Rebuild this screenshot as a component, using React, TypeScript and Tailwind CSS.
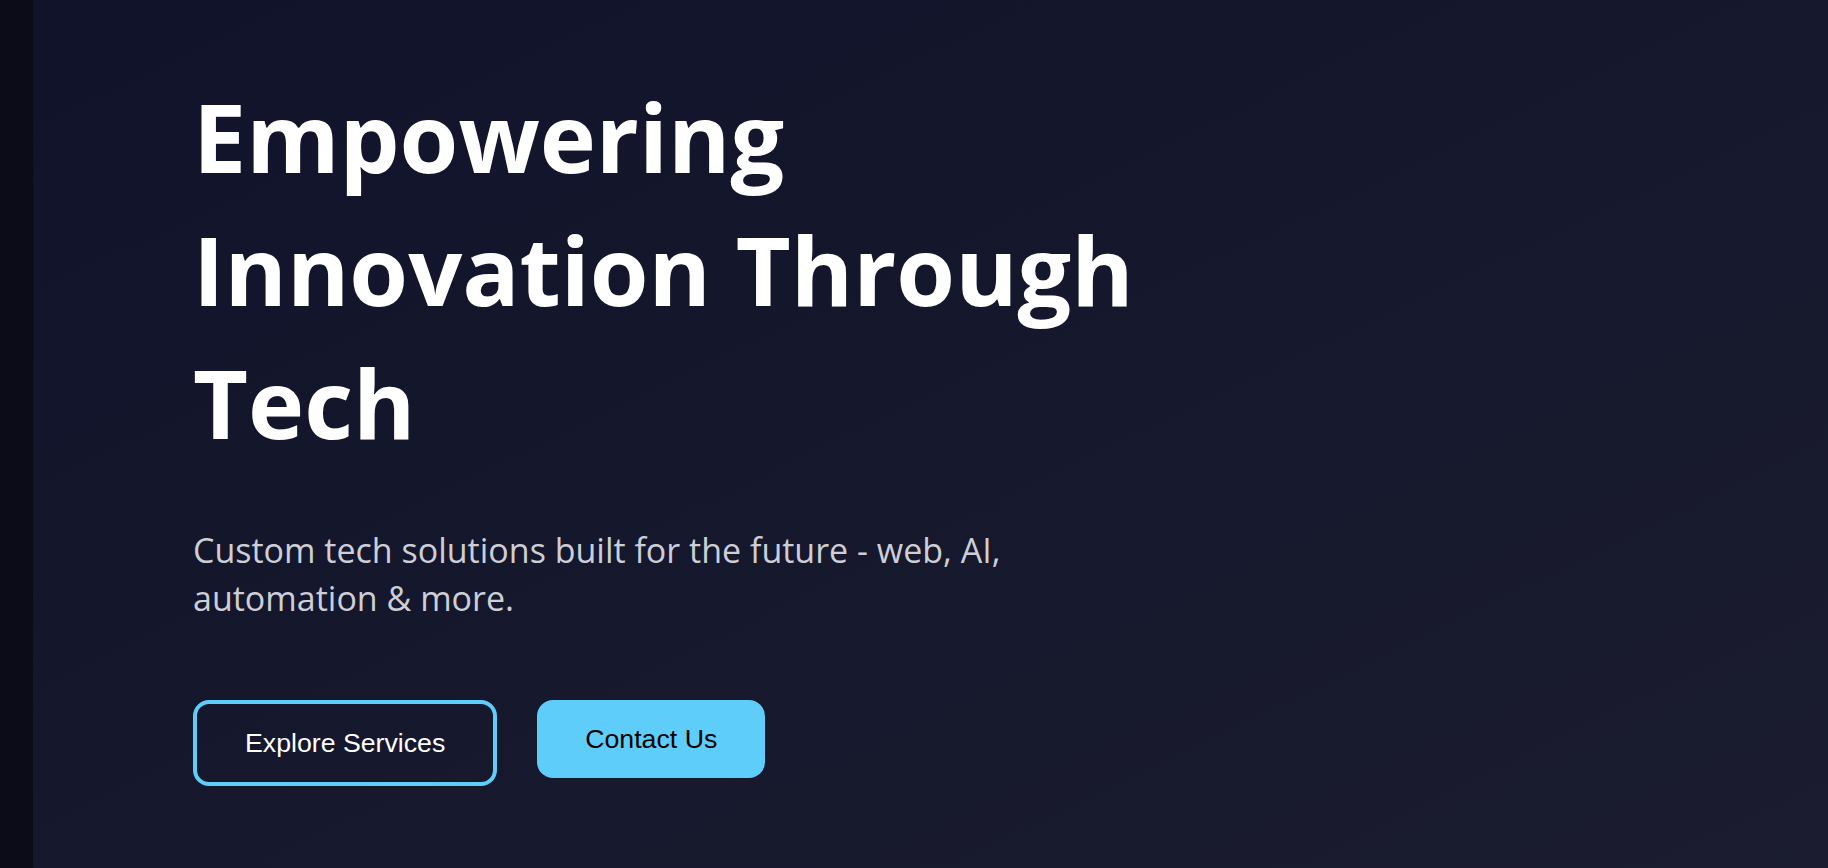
export default function App() {
  return (
    <div className="flex min-h-[868px] w-full bg-[#0b0c17]">
      <div className="w-[33px] shrink-0 bg-[#0b0c17]" />
      <main className="flex-1 bg-linear-to-br from-[#10132a] to-[#1b1c2f] pl-[160px] pt-[70px] font-['Open_Sans','Noto_Sans',sans-serif]">
        <h1 className="max-w-[1040px] text-[95px] font-bold leading-[133px] text-white">
          Empowering Innovation Through Tech
        </h1>
        <p className="mt-[57px] max-w-[900px] text-[34px] leading-[48px] text-[#cdced6]">
          Custom tech solutions built for the future - web, AI, automation &amp; more.
        </p>
        <div className="mt-[78px] flex items-start gap-10 font-['Liberation_Sans',Arial,sans-serif] text-[26.7px] leading-[30px]">
          <button className="rounded-2xl border-4 border-[#5ecdf9] bg-transparent px-12 py-6 text-white">
            Explore Services
          </button>
          <button className="rounded-2xl bg-[#5ecdf9] px-12 py-6 text-black">
            Contact Us
          </button>
        </div>
      </main>
    </div>
  );
}
